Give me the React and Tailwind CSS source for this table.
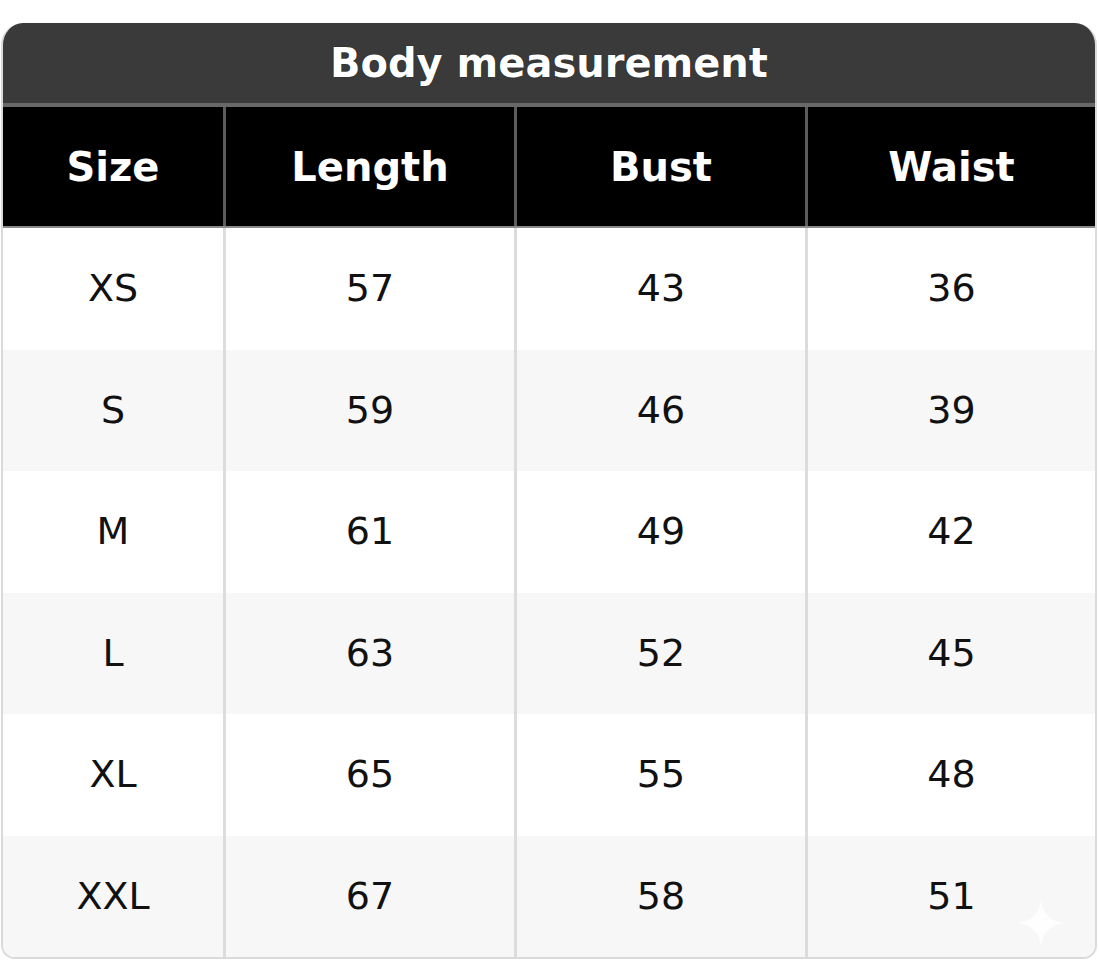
import React from "react";

const rows = [
  ["XS", "57", "43", "36"],
  ["S", "59", "46", "39"],
  ["M", "61", "49", "42"],
  ["L", "63", "52", "45"],
  ["XL", "65", "55", "48"],
  ["XXL", "67", "58", "51"],
];

const headers = ["Size", "Length", "Bust", "Waist"];

export default function App() {
  return (
    <div
      className="min-h-[960px] bg-white pt-[23px] pl-[1px] pr-[2px]"
      style={{ fontFamily: '"DejaVu Sans", Verdana, sans-serif' }}
    >
      <div className="relative overflow-hidden rounded-t-[22px] rounded-b-[14px] border-x-2 border-b-2 border-[#dadada]">
        {/* Title */}
        <div className="flex h-[80px] items-center justify-center bg-[#3a3a3a] text-[40px] font-bold text-white [text-shadow:0_0_1px_#000]">
          Body measurement
        </div>
        <div className="h-[4px] bg-[#686868]" />

        {/* Header */}
        <div className="grid h-[119px] grid-cols-[220px_291px_291px_1fr] bg-black">
          {headers.map((h, i) => (
            <div
              key={h}
              className={`flex items-center justify-center text-[40px] font-bold text-white [text-shadow:0_0_1px_#000] ${
                i > 0 ? "border-l-[3px] border-[#5c5c5c]" : ""
              }`}
            >
              {h}
            </div>
          ))}
        </div>
        <div className="h-[2px] bg-[#8a8a8a]" />

        {/* Body rows */}
        {rows.map((r, ri) => (
          <div
            key={r[0]}
            className={`grid h-[121.5px] grid-cols-[220px_291px_291px_1fr] ${
              ri % 2 === 0 ? "bg-white" : "bg-[#f7f7f7]"
            }`}
          >
            {r.map((v, i) => (
              <div
                key={i}
                className={`flex items-center justify-center text-[38px] text-[#111] ${
                  i > 0 ? "border-l-[3px] border-[#dcdcdc]" : ""
                }`}
              >
                {v}
              </div>
            ))}
          </div>
        ))}

        {/* watermark sparkle */}
        <svg
          className="absolute bottom-[10px] right-[30px] h-[48px] w-[48px]"
          viewBox="0 0 48 48"
        >
          <path
            d="M24 0 C25 14 34 23 48 24 C34 25 25 34 24 48 C23 34 14 25 0 24 C14 23 23 14 24 0 Z"
            fill="#ffffff"
            opacity="0.85"
          />
        </svg>
      </div>
    </div>
  );
}
